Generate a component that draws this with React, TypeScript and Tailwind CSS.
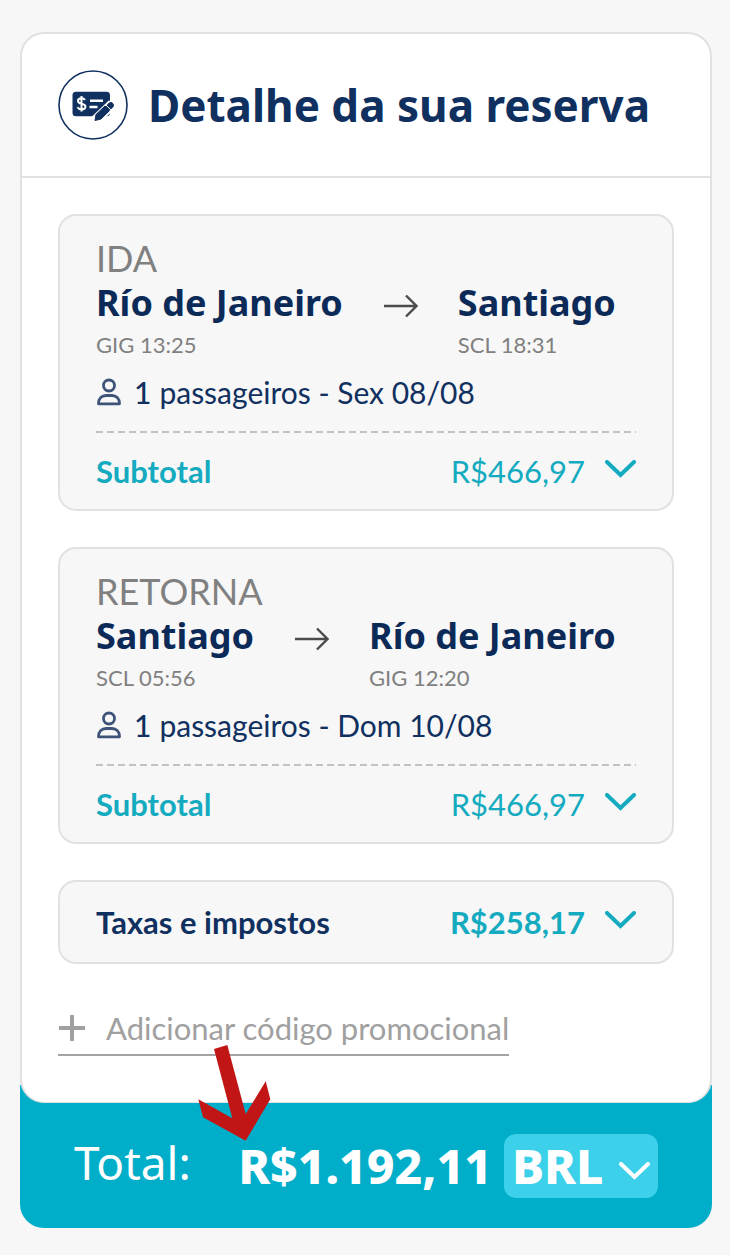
import { useState } from 'react';
import clsx from 'clsx';

interface Stop {
  city: string;
  code: string;
  time: string;
}

interface Leg {
  id: string;
  label: string;
  from: Stop;
  to: Stop;
  passengers: number;
  date: string;
  subtotal: string;
}

const LEGS: Leg[] = [
  {
    id: 'outbound',
    label: 'IDA',
    from: { city: 'Río de Janeiro', code: 'GIG', time: '13:25' },
    to: { city: 'Santiago', code: 'SCL', time: '18:31' },
    passengers: 1,
    date: 'Sex 08/08',
    subtotal: 'R$466,97',
  },
  {
    id: 'return',
    label: 'RETORNA',
    from: { city: 'Santiago', code: 'SCL', time: '05:56' },
    to: { city: 'Río de Janeiro', code: 'GIG', time: '12:20' },
    passengers: 1,
    date: 'Dom 10/08',
    subtotal: 'R$466,97',
  },
];

export default function App() {
  const [currency, setCurrency] = useState('BRL');

  return (
    <main className="min-h-screen bg-[#f7f7f7] pt-8 pr-[18px] pb-[27px] pl-5 font-['Lato',sans-serif] text-[#10305f]">
      <section className="relative z-10 rounded-3xl border-2 border-b border-[#e1e1e1] bg-white">
        <header className="flex items-center gap-5 border-b-2 border-[#e1e1e1] px-9 py-9">
          <BookingIcon />
          <h1 className="font-['Noto_Sans',sans-serif] text-[44px] leading-[70px] font-bold whitespace-nowrap">
            Detalhe da sua reserva
          </h1>
        </header>

        <div className="flex flex-col gap-9 px-9 pt-9 pb-[46px]">
          {LEGS.map((leg) => (
            <LegCard key={leg.id} leg={leg} />
          ))}

          <div className="rounded-[18px] border-2 border-[#e1e1e1] bg-[#f7f7f7] px-9">
            <PriceRow label="Taxas e impostos" price="R$258,17" tone="taxes" />
          </div>

          <button
            type="button"
            className="mt-2 flex items-center gap-5 self-start border-b-2 border-[#a3a3a3] pb-1.5 text-[31px] leading-10 text-[#a0a0a0]"
          >
            <PlusIcon />
            Adicionar código promocional
          </button>
        </div>
      </section>

      {/* Total bar, tucked under the rounded bottom of the card */}
      <footer className="relative -mt-[18px] flex items-start justify-between rounded-b-3xl bg-[#00aec9] pt-[49px] pr-[54px] pb-[30px] pl-[54px] font-['Noto_Sans',sans-serif] text-white">
        <span className="text-[46px] leading-[56px]">Total:</span>
        <div className="flex items-center gap-3 text-[48px] leading-[64px] font-extrabold">
          <span>R$1.192,11</span>
          <div className="relative">
            <select
              aria-label="Moeda"
              value={currency}
              onChange={(e) => setCurrency(e.target.value)}
              className="block h-16 w-[154px] appearance-none rounded-xl bg-[#3dd0ea] pl-2 font-extrabold"
            >
              <option>BRL</option>
              <option>USD</option>
              <option>CLP</option>
            </select>
            <Chevron className="pointer-events-none absolute top-7 right-2 text-white" />
          </div>
        </div>
        <PointerArrow />
      </footer>
    </main>
  );
}

function LegCard({ leg }: { leg: Leg }) {
  return (
    <article className="rounded-[18px] border-2 border-[#e1e1e1] bg-[#f7f7f7] px-9 pt-6">
      <p className="text-[36px] leading-9 text-[#808080]">{leg.label}</p>
      <div className="flex gap-10">
        <StopInfo stop={leg.from} />
        <ArrowIcon />
        <StopInfo stop={leg.to} />
      </div>
      <p className="mt-3 flex items-center text-[30px] leading-10">
        <PersonIcon />
        <span className="mr-2 ml-3 font-medium">{leg.passengers}</span>
        <span>passageiros - {leg.date}</span>
      </p>
      <div className="mt-[19px] h-[2px] bg-[repeating-linear-gradient(90deg,#c2c2c2_0_7px,transparent_7px_11px)]" />
      <PriceRow label="Subtotal" price={leg.subtotal} tone="subtotal" />
    </article>
  );
}

function StopInfo({ stop }: { stop: Stop }) {
  return (
    <div>
      <p className="font-['Noto_Sans',sans-serif] text-[36px] leading-[54px] font-bold whitespace-nowrap text-[#0c2a57]">
        {stop.city}
      </p>
      <p className="text-[22px] leading-[30px] text-[#808080]">
        {stop.code} {stop.time}
      </p>
    </div>
  );
}

interface PriceRowProps {
  label: string;
  price: string;
  tone: 'subtotal' | 'taxes';
}

function PriceRow({ label, price, tone }: PriceRowProps) {
  const [open, setOpen] = useState(false);

  return (
    <button
      type="button"
      aria-expanded={open}
      onClick={() => setOpen(!open)}
      className={clsx(
        'flex w-full items-center text-[31px] leading-10 text-[#14abc0]',
        tone === 'taxes' ? 'py-5' : 'py-[18px]'
      )}
    >
      <span className={clsx('font-bold', tone === 'taxes' && 'text-[#10305f]')}>{label}</span>
      <span className={clsx('mr-5 ml-auto', tone === 'taxes' && 'font-bold')}>{price}</span>
      <Chevron className={clsx('mb-1', open && 'rotate-180')} />
    </button>
  );
}

function Chevron({ className }: { className?: string }) {
  return (
    <svg className={className} width="31" height="18" viewBox="0 0 31 18" fill="none" aria-hidden="true">
      <path d="M2 2l13.500 13L29 2" stroke="currentColor" strokeWidth="4" strokeLinecap="round" />
    </svg>
  );
}

function ArrowIcon() {
  return (
    <svg className="mt-[18px] shrink-0" width="35" height="24" viewBox="0 0 35 24" fill="none" aria-hidden="true">
      <path d="M1 12h32M23 1.500L33.500 12 23 22.500" stroke="#4b4b4b" strokeWidth="2.400" />
    </svg>
  );
}

function PersonIcon() {
  return (
    <svg width="26" height="28" viewBox="0 0 26 28" fill="none" stroke="#3d5478" strokeWidth="2.800" aria-hidden="true">
      <circle cx="13" cy="7.500" r="5.500" />
      <path d="M2.500 25.800c0-5.500 3.500-8.300 7.500-8.300h6c4 0 7.500 2.800 7.500 8.300z" strokeLinejoin="round" />
    </svg>
  );
}

function PlusIcon() {
  return (
    <svg width="28" height="28" viewBox="0 0 28 28" aria-hidden="true">
      <path d="M14 1v26M1 14h26" stroke="currentColor" strokeWidth="4" />
    </svg>
  );
}

// Cheque with a pen crossing its lower right corner
function BookingIcon() {
  return (
    <svg className="shrink-0" width="70" height="70" viewBox="0 0 70 70" fill="none" aria-hidden="true">
      <circle cx="35" cy="35" r="34" stroke="#10305f" strokeWidth="1.600" />
      <rect x="14.500" y="21.700" width="37.500" height="24.500" rx="3.500" fill="#10305f" />
      <path
        d="M27 30c-.8-1.300-2.100-1.800-3.500-1.800-2 0-3.500 1-3.500 2.700 0 3.900 7.400 1.900 7.400 5.700 0 1.800-1.600 2.900-3.800 2.900-1.700 0-3.200-.7-4.100-2.200M23.500 26v15.500"
        stroke="white"
        strokeWidth="2"
      />
      <path d="M32 30.800h13M31.500 37h8" stroke="white" strokeWidth="2.400" />
      <path d="M36 51.500L54.500 34" stroke="white" strokeWidth="10" />
      <path d="M37 50.500l1-6 9-8.500 4.500 4.700-8.500 8.300z" fill="#10305f" stroke="#10305f" strokeLinejoin="round" />
      <path d="M51.200 36.700l1.600-1.500" stroke="#10305f" strokeWidth="6" strokeLinecap="round" />
      <path d="M47.500 34.500l5.200 5.200" stroke="white" />
    </svg>
  );
}

// Red marker pointing at the total amount
function PointerArrow() {
  return (
    <svg
      className="pointer-events-none absolute -top-[41px] left-[177px] z-20"
      width="75"
      height="98"
      viewBox="0 0 75 98"
      aria-hidden="true"
    >
      <path
        d="M17 5L30.300 1l18.400 69L68.700 37.300l4.600 18L48.700 96.700 6 73.300l-4.700-18 34 19z"
        fill="#c21515"
      />
    </svg>
  );
}
